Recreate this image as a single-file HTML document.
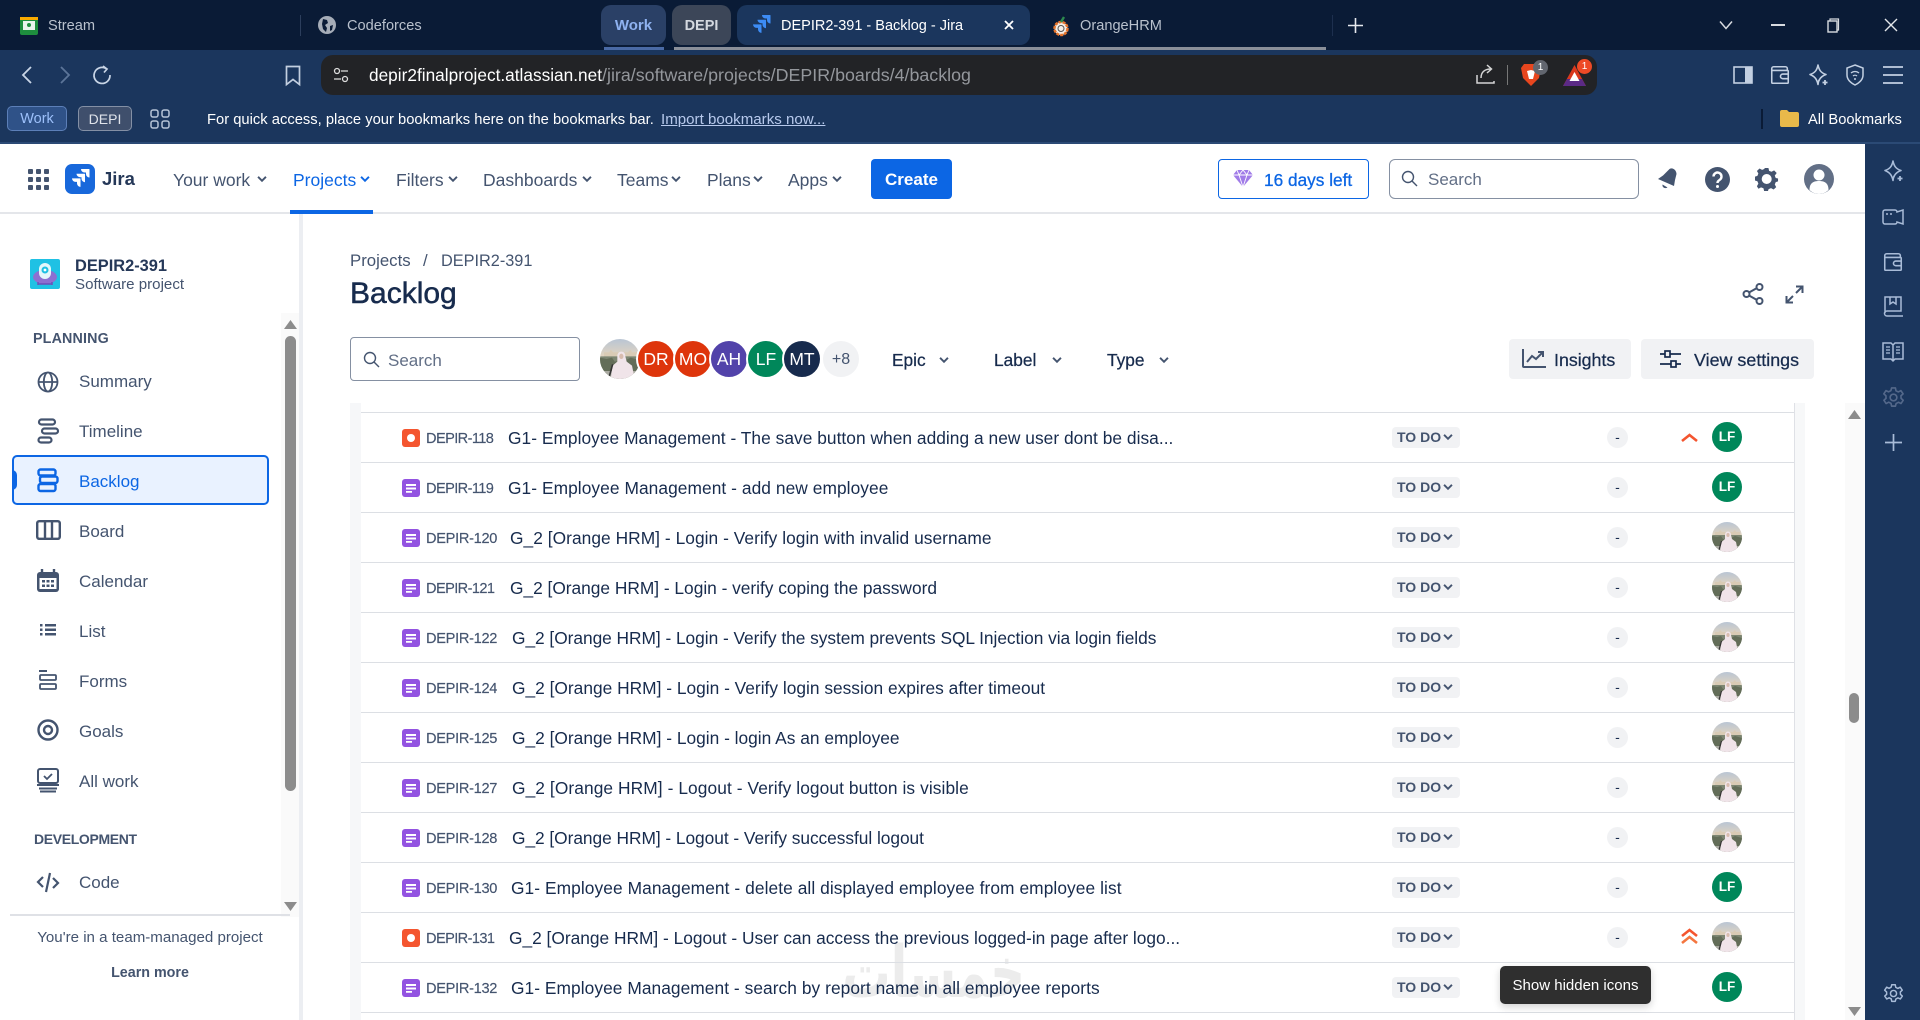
<!DOCTYPE html>
<html lang="en"><head><meta charset="utf-8"><title>DEPIR2-391 - Backlog - Jira</title>
<style>
*{box-sizing:border-box}
html,body{margin:0;padding:0;width:1920px;height:1020px;overflow:hidden;background:#fff;font-family:"Liberation Sans","DejaVu Sans",sans-serif;color:#172b4d}
.a{position:absolute}
.t{position:absolute;white-space:nowrap;height:24px;line-height:24px}
svg{position:absolute;overflow:visible}
.nav{font-size:17.5px;color:#44546f}
.side{font-size:17px;color:#44546f;left:79px}
.row{position:absolute;left:361px;width:1433px;height:50px;border-bottom:1px solid #dcdfe4}
.k{font-size:14.6px;color:#44546f;left:65px;top:14px;letter-spacing:-.3px;-webkit-text-stroke:.15px #44546f}
.k.n{letter-spacing:-.6px}
.s{font-size:17.35px;color:#172b4d;top:13px}
.st{position:absolute;left:1031px;top:14px;width:68px;height:21px;background:#f1f2f4;border-radius:4px;font-size:14px;font-weight:700;color:#44546f;line-height:21px;padding-left:5px;white-space:nowrap}
.st svg{left:49px;top:3px}
.d{position:absolute;left:1246px;top:14px;width:21px;height:21px;border-radius:11px;background:#f1f2f4;font-size:14px;line-height:20px;text-align:center;color:#172b4d}
.lf{position:absolute;left:1351px;top:9px;width:30px;height:30px;border-radius:50%;background:#00875a;color:#fff;font-size:13.5px;font-weight:700;line-height:30px;text-align:center}
.ic{left:41px;top:16px}
.ph{left:1351px;top:9px}
.av{position:absolute;top:339px;width:40px;height:40px;border-radius:50%;border:2px solid #fff;color:#fff;font-size:17.5px;font-weight:500;line-height:36px;text-align:center;background:#de350b}
.btn{position:absolute;background:#f1f2f4;border-radius:4px}
.m{font-size:17.3px;font-weight:500;color:#172b4d;-webkit-text-stroke:.25px #172b4d}
</style></head><body>

<svg width="0" height="0" style="position:absolute">
<defs>
<linearGradient id="sky" x1="0" y1="0" x2="0" y2="1"><stop offset="0" stop-color="#b9c5d4"/><stop offset="1" stop-color="#e2d4c0"/></linearGradient>
<clipPath id="pc"><circle cx="15" cy="15" r="15"/></clipPath>
<symbol id="photo" viewBox="0 0 30 30"><g clip-path="url(#pc)"><rect width="30" height="13" fill="url(#sky)"/><path d="M3 13V10h4l1-2 2 2h11l2-2 1 2h4v3z" fill="#d9cbb5"/><rect y="13" width="30" height="17" fill="#7d8672"/><path d="M0 14l5 1 4-1 2 3 8-1 4-2 7 2v8H0z" fill="#636d58"/><rect y="24" width="30" height="6" fill="#a9a9a0"/><path d="M13 13c0-2 1-3.500 3-3.500s3 1.500 3 3.500l1 4 4 3 2 10H8l1.500-10 3.500-3z" fill="#f0e4e9"/><ellipse cx="16" cy="13" rx="1.600" ry="2" fill="#d8bcae"/><path d="M9.500 19L7 28" stroke="#333" stroke-width="1.200"/></g></symbol>
<symbol id="task" viewBox="0 0 18 18"><rect width="18" height="18" rx="3" fill="#9353e1"/><path d="M4 5h10v2H4zM4 8.500h10v2H4zM4 12h6v1.800H4z" fill="#fff"/></symbol>
<symbol id="bug" viewBox="0 0 18 18"><rect width="18" height="18" rx="3" fill="#f4552f"/><circle cx="9" cy="9" r="4" fill="#fff"/></symbol>
<symbol id="chev" viewBox="0 0 16 16"><path d="M3.500 5.500L8 10l4.500-4.500" fill="none" stroke="currentColor" stroke-width="2.200"/></symbol>
<symbol id="jira" viewBox="0 0 24 24"><path d="M21 2h-8a3.500 3.500 0 0 0 3.500 3.500H18v1.500a3.500 3.500 0 0 0 3.500 3.500V2.500a.5.5 0 0 0-.5-.5zM16.500 6.700h-8a3.500 3.500 0 0 0 3.500 3.500h1.500v1.500a3.500 3.500 0 0 0 3.500 3.500V7.200a.5.5 0 0 0-.5-.5zM12 11.400H4a3.500 3.500 0 0 0 3.500 3.500H9v1.500a3.500 3.500 0 0 0 3.500 3.500v-8a.5.5 0 0 0-.5-.5z" fill="currentColor"/></symbol>
<symbol id="sparkle" viewBox="0 0 24 24"><path d="M12 2c1 5 3 8 8 9.500-3 1-5 2.500-6.500 5-1 1.500-1.500 3-1.500 5-1-5-3-8-8-10 5-1.500 7-4.500 8-9.500z" fill="none" stroke="currentColor" stroke-width="1.600" stroke-linejoin="round"/><path d="M19 17v5M16.500 19.500h5" stroke="currentColor" stroke-width="1.800"/></symbol>
<symbol id="wallet" viewBox="0 0 24 24"><path d="M20 7V5a2 2 0 0 0-2-2H5a2 2 0 0 0-2 2v15a1 1 0 0 0 1 1h16a1 1 0 0 0 1-1V8a1 1 0 0 0-1-1H3.500M21 11h-6a2.500 2.500 0 0 0 0 5h6" fill="none" stroke="currentColor" stroke-width="1.700"/></symbol>
<symbol id="gear" viewBox="0 0 24 24"><path d="M10 2h4l.6 3 2.400 1.200 2.700-1.400 2.300 3.400-2.200 2 .1 2.700 2.200 2-2.300 3.400-2.700-1.300-2.400 1.300-.7 2.700h-4l-.6-2.900-2.400-1.200-2.700 1.400-2.300-3.400 2.200-2-.1-2.700-2.200-2 2.300-3.400 2.700 1.300 2.400-1.300z" fill="none" stroke="currentColor" stroke-width="1.700" stroke-linejoin="round"/><circle cx="12" cy="12" r="3.500" fill="none" stroke="currentColor" stroke-width="1.700"/></symbol>
</defs></svg>

<!-- tab strip -->
<div class="a" style="left:0;top:0;width:1920px;height:50px;background:#0a1b36"></div>
<svg style="left:20px;top:17px" width="18" height="18" viewBox="0 0 18 18"><rect width="18" height="18" rx="2" fill="#1e8e3e"/><rect y="0" width="18" height="3" fill="#f9ab00"/><rect x="3" y="4" width="12" height="9" fill="#fff" opacity=".9"/><circle cx="9" cy="8" r="2" fill="#1e8e3e"/></svg>
<div class="t" style="left:48px;top:14px;font-size:14.600px;color:#b9c1cd">Stream</div>
<div class="a" style="left:300px;top:15px;width:1px;height:21px;background:#2c3e5c"></div>
<svg style="left:318px;top:16px" width="18" height="18" viewBox="0 0 18 18"><circle cx="9" cy="9" r="9" fill="#a6adb8"/><path d="M5 3l4 1 1 3-3 2 2 3-1 4-3-3-1-5zM12 10l3-1-1 5-2 1z" fill="#0a1b36"/></svg>
<div class="t" style="left:347px;top:14px;font-size:14.600px;color:#b9c1cd">Codeforces</div>
<div class="a" style="left:601px;top:5px;width:65px;height:40px;background:#2a4066;border-radius:10px"></div>
<div class="t" style="left:601px;top:14px;width:65px;text-align:center;font-size:15px;font-weight:700;color:#8fb2f0">Work</div>
<div class="a" style="left:672px;top:5px;width:59px;height:40px;background:#3c4658;border-radius:10px"></div>
<div class="t" style="left:672px;top:14px;width:59px;text-align:center;font-size:14.500px;font-weight:700;color:#d5d9e0">DEPI</div>
<div class="a" style="left:737px;top:5px;width:293px;height:40px;background:#1b365d;border-radius:10px"></div>
<svg style="left:749px;top:13px;color:#3d8cf5" width="24" height="24"><use href="#jira" width="24" height="24"/></svg>
<div class="t" style="left:781px;top:14px;font-size:14.500px;color:#fff">DEPIR2-391 - Backlog - Jira</div>
<svg style="left:1003px;top:19px" width="12" height="12" viewBox="0 0 12 12"><path d="M2 2l8 8M10 2l-8 8" stroke="#fff" stroke-width="1.800"/></svg>
<svg style="left:1052px;top:16px" width="18" height="20" viewBox="0 0 18 20"><circle cx="9" cy="12.500" r="6.500" fill="#f5efe8" stroke="#e8742a" stroke-width="2.500" stroke-dasharray="3 1"/><circle cx="9" cy="12.500" r="3" fill="none" stroke="#555" stroke-width="1"/><path d="M9 6l3-5" stroke="#2d8a4e" stroke-width="2.400"/></svg>
<div class="t" style="left:1080px;top:14px;font-size:14.600px;color:#b9c1cd">OrangeHRM</div>
<div class="a" style="left:1332px;top:15px;width:1px;height:21px;background:#1d2f4e"></div>
<svg style="left:1348px;top:18px" width="15" height="15" viewBox="0 0 15 15"><path d="M7.500 0v15M0 7.500h15" stroke="#e6e9ee" stroke-width="1.600"/></svg>
<div class="a" style="left:604px;top:47px;width:60px;height:3px;background:#4a6aa5"></div>
<div class="a" style="left:674px;top:47px;width:652px;height:3px;background:#8a8f99"></div>
<svg style="left:1719px;top:20px" width="14" height="10" viewBox="0 0 14 10"><path d="M1 1.500l6 7 6-7" fill="none" stroke="#d8dbe0" stroke-width="1.500"/></svg>
<div class="a" style="left:1771px;top:24px;width:14px;height:1.500px;background:#d8dbe0"></div>
<svg style="left:1827px;top:18px" width="13" height="15" viewBox="0 0 13 15"><path d="M3 2.500V1h8.500v11H10" fill="none" stroke="#d8dbe0" stroke-width="1.200"/><rect x="1" y="3" width="9" height="11" fill="none" stroke="#d8dbe0" stroke-width="1.400"/></svg>
<svg style="left:1884px;top:18px" width="14" height="14" viewBox="0 0 14 14"><path d="M1 1l12 12M13 1L1 13" stroke="#e3e6ea" stroke-width="1.400"/></svg>

<!-- toolbar -->
<div class="a" style="left:0;top:50px;width:1920px;height:94px;background:#1b365d"></div>
<div class="a" style="left:0;top:142px;width:1920px;height:2px;background:#2b4a75"></div>
<svg style="left:21px;top:65px" width="12" height="20" viewBox="0 0 12 20"><path d="M10 2L2 10l8 8" fill="none" stroke="#c9d5e6" stroke-width="1.800"/></svg>
<svg style="left:59px;top:65px" width="12" height="20" viewBox="0 0 12 20"><path d="M2 2l8 8-8 8" fill="none" stroke="#5c7599" stroke-width="1.800"/></svg>
<svg style="left:92px;top:65px" width="20" height="20" viewBox="0 0 20 20"><path d="M14 3.500A8 8 0 1 0 18 10" fill="none" stroke="#c9d5e6" stroke-width="1.700"/><path d="M11 1l4 3-3 3.500" fill="none" stroke="#c9d5e6" stroke-width="1.700"/></svg>
<svg style="left:285px;top:65px" width="16" height="21" viewBox="0 0 16 21"><path d="M1.500 1.500h13v18l-6.500-5-6.500 5z" fill="none" stroke="#c3cfe0" stroke-width="1.700"/></svg>
<div class="a" style="left:321px;top:55px;width:1276px;height:40px;background:#222326;border-radius:12px"></div>
<svg style="left:333px;top:67px" width="16" height="16" viewBox="0 0 16 16"><circle cx="4" cy="4" r="2.500" fill="none" stroke="#ddd" stroke-width="1.300"/><path d="M8 4h7M1 12h7" stroke="#ddd" stroke-width="1.300"/><circle cx="12" cy="12" r="2.500" fill="none" stroke="#ddd" stroke-width="1.300"/></svg>
<div class="t" style="left:369px;top:63px;font-size:17.250px;color:#fff">depir2finalproject.atlassian.net<span style="color:#94979c;font-size:17.850px">/jira/software/projects/DEPIR/boards/4/backlog</span></div>
<svg style="left:1476px;top:64px" width="20" height="21" viewBox="0 0 20 21"><path d="M1 11v8h17v-2M5 14c0-6 4-9 10-9M11 1l4.500 4-4.500 4" fill="none" stroke="#d5d5d5" stroke-width="1.500"/></svg>
<div class="a" style="left:1507px;top:65px;width:1px;height:20px;background:#777"></div>
<svg style="left:1521px;top:63px" width="20" height="24" viewBox="0 0 20 24"><path d="M3 1h14l3 4-2 10-8 8-8-8L0 5z" fill="#e8461e"/><path d="M6 8l4-1 4 1-1 4-1 4h-4l-1-4z" fill="#fff"/></svg>
<div class="a" style="left:1533px;top:60px;width:15px;height:15px;border-radius:50%;background:#62666f;color:#fff;font-size:10px;line-height:15px;text-align:center">1</div>
<svg style="left:1563px;top:65px" width="23" height="21" viewBox="0 0 23 21"><path d="M11.500 0L23 21H0z" fill="#d9391f"/><path d="M0 21l4-7h15l4 7z" fill="#5b2a86"/><path d="M11.500 7l5 9h-10z" fill="#fff"/></svg>
<div class="a" style="left:1577px;top:59px;width:15px;height:15px;border-radius:50%;background:#ee4a26;color:#fff;font-size:10px;line-height:15px;text-align:center">1</div>
<svg style="left:1733px;top:66px" width="20" height="18" viewBox="0 0 20 18"><rect x="1" y="1" width="18" height="16" fill="none" stroke="#c3d0e2" stroke-width="1.600"/><rect x="12" y="1" width="7" height="16" fill="#c3d0e2"/></svg>
<svg style="left:1769px;top:64px;color:#c3d0e2" width="22" height="22"><use href="#wallet" width="22" height="22"/></svg>
<svg style="left:1806px;top:63px;color:#c3d0e2" width="24" height="24"><use href="#sparkle" width="24" height="24"/></svg>
<svg style="left:1846px;top:64px" width="18" height="22" viewBox="0 0 18 22"><path d="M9 1l8 3v7c0 5-4 8-8 10-4-2-8-5-8-10V4z" fill="none" stroke="#c3d0e2" stroke-width="1.500"/><path d="M5 9a6 6 0 0 1 8 0M7 12a3 3 0 0 1 4 0" fill="none" stroke="#c3d0e2" stroke-width="1.300"/><circle cx="9" cy="15" r="1" fill="#c3d0e2"/></svg>
<svg style="left:1883px;top:66px" width="20" height="18" viewBox="0 0 20 18"><path d="M0 1h20M0 9h20M0 17h20" stroke="#c3d0e2" stroke-width="1.700"/></svg>

<!-- bookmarks bar -->
<div class="a" style="left:7px;top:106px;width:60px;height:25px;background:#2f5288;border:1px solid #5c7fb8;border-radius:5px;color:#9cc0fa;font-size:14.500px;line-height:24px;text-align:center">Work</div>
<div class="a" style="left:78px;top:106px;width:54px;height:25px;background:#3f4f6c;border:1px solid #8490a5;border-radius:5px;color:#dfe3ea;font-size:14px;line-height:24px;text-align:center">DEPI</div>
<svg style="left:150px;top:109px" width="20" height="20" viewBox="0 0 20 20"><g fill="none" stroke="#b6c3d6" stroke-width="1.500"><rect x="1" y="1" width="7" height="7" rx="2"/><rect x="12" y="1" width="7" height="7" rx="2"/><rect x="1" y="12" width="7" height="7" rx="2"/><rect x="12" y="12" width="7" height="7" rx="2"/></g></svg>
<div class="t" style="left:207px;top:108px;font-size:14.750px;color:#fff">For quick access, place your bookmarks here on the bookmarks bar.</div>
<div class="t" style="left:661px;top:108px;font-size:15.100px;color:#b7c9ec;text-decoration:underline">Import bookmarks now...</div>
<div class="a" style="left:1761px;top:109px;width:2px;height:20px;background:#0a1b36"></div>
<svg style="left:1780px;top:110px" width="19" height="17" viewBox="0 0 19 17"><path d="M0 2a2 2 0 0 1 2-2h5l2 2h8a2 2 0 0 1 2 2v11a2 2 0 0 1-2 2H2a2 2 0 0 1-2-2z" fill="#e8b94a"/></svg>
<div class="t" style="left:1808px;top:108px;font-size:14.700px;color:#fff">All Bookmarks</div>

<!-- jira top nav -->
<div class="a" style="left:0;top:212px;width:1865px;height:2px;background:#e4e6ea"></div>
<svg style="left:28px;top:169px" width="21" height="21" viewBox="0 0 21 21"><g fill="#44546f"><rect width="5" height="5" rx="1"/><rect x="8" width="5" height="5" rx="1"/><rect x="16" width="5" height="5" rx="1"/><rect y="8" width="5" height="5" rx="1"/><rect x="8" y="8" width="5" height="5" rx="1"/><rect x="16" y="8" width="5" height="5" rx="1"/><rect y="16" width="5" height="5" rx="1"/><rect x="8" y="16" width="5" height="5" rx="1"/><rect x="16" y="16" width="5" height="5" rx="1"/></g></svg>
<div class="a" style="left:65px;top:164px;width:30px;height:30px;background:#1868db;border-radius:7px"></div>
<svg style="left:68px;top:167px;color:#fff" width="24" height="24"><use href="#jira" width="24" height="24"/></svg>
<div class="t" style="left:102px;top:167px;font-size:18.500px;font-weight:700;color:#253858">Jira</div>
<div class="t nav" style="left:173px;top:168px">Your work</div>
<svg style="left:255px;top:172px;color:#44546f" width="14" height="14"><use href="#chev" width="14" height="14"/></svg>
<div class="t nav" style="left:293px;top:168px;color:#0c66e4">Projects</div>
<svg style="left:358px;top:172px;color:#0c66e4" width="14" height="14"><use href="#chev" width="14" height="14"/></svg>
<div class="t nav" style="left:396px;top:168px">Filters</div>
<svg style="left:446px;top:172px;color:#44546f" width="14" height="14"><use href="#chev" width="14" height="14"/></svg>
<div class="t nav" style="left:483px;top:168px">Dashboards</div>
<svg style="left:580px;top:172px;color:#44546f" width="14" height="14"><use href="#chev" width="14" height="14"/></svg>
<div class="t nav" style="left:617px;top:168px">Teams</div>
<svg style="left:669px;top:172px;color:#44546f" width="14" height="14"><use href="#chev" width="14" height="14"/></svg>
<div class="t nav" style="left:707px;top:168px">Plans</div>
<svg style="left:751px;top:172px;color:#44546f" width="14" height="14"><use href="#chev" width="14" height="14"/></svg>
<div class="t nav" style="left:788px;top:168px">Apps</div>
<svg style="left:830px;top:172px;color:#44546f" width="14" height="14"><use href="#chev" width="14" height="14"/></svg>
<div class="a" style="left:290px;top:210px;width:83px;height:4px;background:#0c66e4"></div>
<div class="a" style="left:871px;top:159px;width:81px;height:40px;background:#0c66e4;border-radius:4px;color:#fff;font-size:17px;font-weight:700;line-height:41px;text-align:center">Create</div>
<div class="a" style="left:1218px;top:159px;width:151px;height:40px;border:1.500px solid #0c66e4;border-radius:4px"></div>
<svg style="left:1233px;top:169px" width="20" height="18" viewBox="0 0 20 18"><path d="M4 1h12l4 5-10 12L0 6z" fill="#a07be8"/><path d="M0 6h20M6 6l4 12 4-12M4 1l2 5M16 1l-2 5M10 1L6 6M10 1l4 5" stroke="#fff" stroke-width=".9" fill="none"/></svg>
<div class="t" style="left:1264px;top:168px;font-size:17.250px;font-weight:500;color:#0c66e4;-webkit-text-stroke:.3px #0c66e4">16 days left</div>
<div class="a" style="left:1389px;top:159px;width:250px;height:40px;border:1.500px solid #8590a2;border-radius:6px"></div>
<svg style="left:1401px;top:170px" width="17" height="17" viewBox="0 0 17 17"><circle cx="7" cy="7" r="5.500" fill="none" stroke="#44546f" stroke-width="1.400"/><path d="M11 11l5 5" stroke="#44546f" stroke-width="1.400"/></svg>
<div class="t" style="left:1428px;top:168px;font-size:17px;color:#626f86">Search</div>
<svg style="left:1656px;top:167px" width="22" height="24" viewBox="0 0 22 24"><path d="M13.500 2c3-2 7 1 7 5l-1.500 6-1 6-16-7 5-3.500z" fill="#44546f"/><path d="M6.500 17.500c-.5 3 2.500 4.500 5 3z" fill="#44546f"/></svg>
<svg style="left:1705px;top:167px" width="25" height="25" viewBox="0 0 25 25"><circle cx="12.500" cy="12.500" r="12.500" fill="#44546f"/><path d="M8.500 9.500a4 4 0 1 1 6 3.500c-1.200.7-2 1.300-2 3" fill="none" stroke="#fff" stroke-width="2.400"/><circle cx="12.500" cy="19.500" r="1.500" fill="#fff"/></svg>
<svg style="left:1755px;top:167px" width="24" height="24" viewBox="0 0 24 24"><path d="M10 1h4l.7 3 2.500 1 2.700-1.500 2.700 2.700L20.600 9l1 2.500 2.400.5v3l-2.400.7-1 2.500 1.500 2.700-2.700 2.600-2.700-1.500-2.500 1-.7 2h-4l-.7-2.800-2.500-1-2.700 1.500L2 20l1.500-2.700-1-2.500L0 14v-4l2.500-.7 1-2.500L2 4.200l2.700-2.700L7.400 3l2.500-1z" fill="#44546f" transform="scale(.96)"/><circle cx="11.700" cy="12" r="5" fill="#fff"/></svg>
<svg style="left:1804px;top:164px" width="30" height="30" viewBox="0 0 30 30"><circle cx="15" cy="15" r="15" fill="#626f86"/><circle cx="15" cy="11" r="5.500" fill="#fff"/><path d="M5.500 26c0-7 4-9 9.500-9s9.500 2 9.500 9c-2.500 2.500-6 4-9.500 4s-7-1.500-9.500-4z" fill="#fff"/></svg>

<!-- sidebar -->
<div class="a" style="left:299px;top:214px;width:4px;height:806px;background:#eceef2"></div>
<svg style="left:30px;top:259px" width="30" height="30" viewBox="0 0 30 30"><rect width="30" height="30" rx="2" fill="#1fc1e4"/><ellipse cx="15" cy="18" rx="12" ry="7" fill="#8d6fd1"/><path d="M8 23v3M22 23v3M8 25h14" stroke="#6c4fb8" stroke-width="1.500"/><rect x="9" y="4" width="12" height="16" rx="6" fill="#e4f7fb"/><circle cx="15" cy="11" r="3.500" fill="#1fc1e4"/><circle cx="15" cy="11" r="1.400" fill="#fff"/></svg>
<div class="t" style="left:75px;top:254px;font-size:16.400px;font-weight:700;color:#253858">DEPIR2-391</div>
<div class="t" style="left:75px;top:273px;font-size:15.100px;color:#44546f">Software project</div>
<div class="a" style="left:281px;top:313px;width:18px;height:604px;background:#fafafa"></div>
<svg style="left:284px;top:320px" width="13" height="9" viewBox="0 0 13 9"><path d="M6.500 0L13 9H0z" fill="#8c8c8c"/></svg>
<svg style="left:284px;top:902px" width="13" height="9" viewBox="0 0 13 9"><path d="M0 0h13L6.500 9z" fill="#8c8c8c"/></svg>
<div class="a" style="left:285px;top:336px;width:11px;height:455px;background:#8c8c8c;border-radius:6px"></div>
<div class="t" style="left:33px;top:327px;font-size:14.300px;font-weight:700;color:#44546f;letter-spacing:.15px">PLANNING</div>
<div class="a" style="left:12px;top:455px;width:257px;height:50px;background:#e9f2ff;border:2.500px solid #0c66e4;border-radius:5px"></div>
<div class="a" style="left:12px;top:470px;width:5px;height:20px;background:#0c66e4;border-radius:0 5px 5px 0"></div>
<div class="t side" style="top:370px">Summary</div>
<div class="t side" style="top:420px">Timeline</div>
<div class="t side" style="top:470px;color:#0c66e4">Backlog</div>
<div class="t side" style="top:520px">Board</div>
<div class="t side" style="top:570px">Calendar</div>
<div class="t side" style="top:620px">List</div>
<div class="t side" style="top:670px">Forms</div>
<div class="t side" style="top:720px">Goals</div>
<div class="t side" style="top:770px">All work</div>
<div class="t" style="left:34px;top:827px;font-size:14px;font-weight:700;color:#44546f;letter-spacing:-.35px">DEVELOPMENT</div>
<div class="t side" style="top:871px">Code</div>
<svg style="left:37px;top:371px" width="22" height="22" viewBox="0 0 22 22"><g fill="none" stroke="#44546f" stroke-width="1.800"><circle cx="11" cy="11" r="9.500"/><ellipse cx="11" cy="11" rx="4.200" ry="9.500"/><path d="M1.500 11h19"/></g></svg>
<svg style="left:37px;top:418px" width="22" height="27" viewBox="0 0 22 27"><g fill="none" stroke="#44546f" stroke-width="2.200"><rect x="2" y="1.500" width="16" height="5" rx="2.500"/><rect x="5" y="10.500" width="16" height="5" rx="2.500"/><rect x="1.500" y="19.500" width="13" height="5" rx="2.500"/></g></svg>
<svg style="left:37px;top:468px" width="22" height="25" viewBox="0 0 22 25"><g fill="none" stroke="#0c66e4" stroke-width="2.400"><rect x="1.500" y="1.500" width="17" height="6" rx="2"/><rect x="3" y="8.500" width="17.500" height="6.500" rx="2"/><rect x="1.500" y="16" width="17" height="7" rx="2"/></g></svg>
<svg style="left:36px;top:520px" width="25" height="20" viewBox="0 0 25 20"><rect x="1.200" y="1.200" width="22.600" height="17.600" rx="2" fill="none" stroke="#44546f" stroke-width="2.400"/><path d="M9 1v18M16 1v18" stroke="#44546f" stroke-width="2.400"/></svg>
<svg style="left:37px;top:569px" width="22" height="23" viewBox="0 0 22 23"><rect y="3" width="22" height="20" rx="3" fill="#44546f"/><rect x="2.500" y="9" width="17" height="11" fill="#fff"/><path d="M5 0v5M17 0v5" stroke="#44546f" stroke-width="2.400"/><g fill="#44546f"><rect x="5" y="11" width="3" height="2.500"/><rect x="9.500" y="11" width="3" height="2.500"/><rect x="14" y="11" width="3" height="2.500"/><rect x="5" y="15.500" width="3" height="2.500"/><rect x="9.500" y="15.500" width="3" height="2.500"/><rect x="14" y="15.500" width="3" height="2.500"/></g></svg>
<svg style="left:40px;top:623px" width="16" height="14" viewBox="0 0 16 14"><g fill="#44546f"><rect y="1" width="2.500" height="2.500"/><rect y="5.500" width="2.500" height="2.500"/><rect y="10" width="2.500" height="2.500"/><rect x="5" y="1" width="11" height="2.500"/><rect x="5" y="5.500" width="11" height="2.500"/><rect x="5" y="10" width="11" height="2.500"/></g></svg>
<svg style="left:39px;top:670px" width="18" height="20" viewBox="0 0 18 20"><path d="M0 1h8" stroke="#44546f" stroke-width="2"/><rect x="1" y="5" width="16" height="5" rx="1" fill="none" stroke="#44546f" stroke-width="1.800"/><rect x="1" y="14" width="16" height="5" rx="1" fill="none" stroke="#44546f" stroke-width="1.800"/></svg>
<svg style="left:37px;top:719px" width="22" height="22" viewBox="0 0 22 22"><circle cx="11" cy="11" r="9.500" fill="none" stroke="#44546f" stroke-width="2.400"/><circle cx="11" cy="11" r="4" fill="none" stroke="#44546f" stroke-width="2.400"/></svg>
<svg style="left:37px;top:768px" width="22" height="24" viewBox="0 0 22 24"><rect x="1" y="1" width="20" height="14" rx="2" fill="none" stroke="#44546f" stroke-width="2"/><path d="M7 8l3 3 5-5" fill="none" stroke="#44546f" stroke-width="1.800"/><path d="M0 17h22M2 20.500h18M3 23.500h16" stroke="#44546f" stroke-width="2"/></svg>
<svg style="left:37px;top:873px" width="22" height="19" viewBox="0 0 22 19"><path d="M6 4l-5 5 5 5M16 5l5 5-5 5" fill="none" stroke="#44546f" stroke-width="2.200"/><path d="M13 0L9 19" stroke="#44546f" stroke-width="2.200"/></svg>
<div class="a" style="left:10px;top:914px;width:280px;height:2px;background:#dfe1e6"></div>
<div class="t" style="left:0;width:300px;top:926px;text-align:center;font-size:15.100px;color:#44546f">You're in a team-managed project</div>
<div class="t" style="left:0;width:300px;top:961px;text-align:center;font-size:14.300px;font-weight:700;color:#44546f">Learn more</div>

<!-- page header -->
<div class="t" style="left:350px;top:249px;font-size:16.800px;color:#44546f">Projects</div>
<div class="t" style="left:423px;top:249px;font-size:16.800px;color:#44546f">/</div>
<div class="t" style="left:441px;top:249px;font-size:16.300px;color:#44546f">DEPIR2-391</div>
<div class="t" style="left:350px;top:282px;font-size:30px;font-weight:500;color:#172b4d;-webkit-text-stroke:.5px #172b4d">Backlog</div>
<svg style="left:1742px;top:283px" width="22" height="22" viewBox="0 0 22 22"><g fill="none" stroke="#44546f" stroke-width="2"><circle cx="4.500" cy="11" r="3"/><circle cx="17.500" cy="4" r="3"/><circle cx="17.500" cy="18" r="3"/><path d="M7 9.500l8-4.500M7 12.500l8 4.500"/></g></svg>
<svg style="left:1785px;top:285px" width="19" height="19" viewBox="0 0 19 19"><path d="M11 1.500h6.500V8M17 2l-6 6M8 17.500H1.500V11M2 17l6-6" fill="none" stroke="#44546f" stroke-width="2"/></svg>
<div class="a" style="left:350px;top:337px;width:230px;height:44px;border:1.500px solid #8590a2;border-radius:4px"></div>
<svg style="left:363px;top:351px" width="17" height="17" viewBox="0 0 17 17"><circle cx="7" cy="7" r="5.500" fill="none" stroke="#44546f" stroke-width="1.400"/><path d="M11 11l5 5" stroke="#44546f" stroke-width="1.400"/></svg>
<div class="t" style="left:388px;top:349px;font-size:17px;color:#626f86">Search</div>
<svg style="left:600px;top:339px" width="40" height="40"><use href="#photo" width="40" height="40"/></svg>
<div class="av" style="left:636px">DR</div>
<div class="av" style="left:673px">MO</div>
<div class="av" style="left:709px;background:#5243aa">AH</div>
<div class="av" style="left:746px;background:#00875a">LF</div>
<div class="av" style="left:782px;background:#172b4d">MT</div>
<div class="av" style="left:821px;background:#f1f2f4;color:#44546f;font-weight:400;font-size:16px;line-height:38px">+8</div>
<div class="t m" style="left:892px;top:348px">Epic</div>
<svg style="left:937px;top:353px;color:#44546f" width="14" height="14"><use href="#chev" width="14" height="14"/></svg>
<div class="t m" style="left:994px;top:348px">Label</div>
<svg style="left:1050px;top:353px;color:#44546f" width="14" height="14"><use href="#chev" width="14" height="14"/></svg>
<div class="t m" style="left:1107px;top:348px">Type</div>
<svg style="left:1157px;top:353px;color:#44546f" width="14" height="14"><use href="#chev" width="14" height="14"/></svg>
<div class="btn" style="left:1509px;top:339px;width:122px;height:40px"></div>
<svg style="left:1522px;top:349px" width="24" height="19" viewBox="0 0 24 19"><path d="M1 0v17a1 1 0 0 0 1 1h22" fill="none" stroke="#44546f" stroke-width="2"/><path d="M5 13l5-6 4 3 7-7M16 3h5v5" fill="none" stroke="#44546f" stroke-width="2"/></svg>
<div class="t m" style="left:1554px;top:348px;font-size:17.800px">Insights</div>
<div class="btn" style="left:1641px;top:339px;width:173px;height:40px"></div>
<svg style="left:1660px;top:350px" width="21" height="18" viewBox="0 0 21 18"><path d="M0 4h5M10 4h11M0 14h11M16 14h5" stroke="#172b4d" stroke-width="1.700"/><rect x="5" y="1" width="5" height="6" fill="none" stroke="#172b4d" stroke-width="1.700"/><rect x="11" y="11" width="5" height="6" fill="none" stroke="#172b4d" stroke-width="1.700"/></svg>
<div class="t m" style="left:1694px;top:348px;font-size:17.900px">View settings</div>

<!-- backlog list -->
<div class="a" style="left:350px;top:403px;width:11px;height:617px;background:#f6f7f9"></div>
<div class="a" style="left:1794px;top:403px;width:1.500px;height:617px;background:#dfe1e6"></div>
<div class="a" style="left:1795px;top:403px;width:10px;height:617px;background:#f7f8f9"></div>
<div class="a" style="left:361px;top:412px;width:1433px;height:1px;background:#dcdfe4"></div>
<div class="a" dir="rtl" style="left:845px;top:932px;width:180px;height:80px;line-height:80px;font-family:'DejaVu Sans',sans-serif;font-weight:700;font-size:72px;color:#ececec;white-space:nowrap;text-align:right;transform:scaleX(.67);transform-origin:right center">خمسات</div>

<div class="row" style="top:413px"><svg class="ic" width="18" height="18"><use href="#bug" width="18" height="18"/></svg><div class="t k n">DEPIR-118</div><div class="t s" style="left:147px;letter-spacing:.03px">G1- Employee Management - The save button when adding a new user dont be disa...</div><div class="st">TO DO<svg width="14" height="14"><use href="#chev" width="14" height="14"/></svg></div><div class="d">-</div><svg style="left:1320px;top:20px" width="17" height="9" viewBox="0 0 17 9"><path d="M1 8l7.500-6L16 8" fill="none" stroke="#f4552f" stroke-width="2.600"/></svg><div class="lf">LF</div></div>
<div class="row" style="top:463px"><svg class="ic" width="18" height="18"><use href="#task" width="18" height="18"/></svg><div class="t k n">DEPIR-119</div><div class="t s" style="left:147px;letter-spacing:.06px">G1- Employee Management - add new employee</div><div class="st">TO DO<svg width="14" height="14"><use href="#chev" width="14" height="14"/></svg></div><div class="d">-</div><div class="lf">LF</div></div>
<div class="row" style="top:513px"><svg class="ic" width="18" height="18"><use href="#task" width="18" height="18"/></svg><div class="t k">DEPIR-120</div><div class="t s" style="left:149px;letter-spacing:.04px">G_2 [Orange HRM] - Login - Verify login with invalid username</div><div class="st">TO DO<svg width="14" height="14"><use href="#chev" width="14" height="14"/></svg></div><div class="d">-</div><svg class="ph" width="30" height="30"><use href="#photo" width="30" height="30"/></svg></div>
<div class="row" style="top:563px"><svg class="ic" width="18" height="18"><use href="#task" width="18" height="18"/></svg><div class="t k n">DEPIR-121</div><div class="t s" style="left:149px;letter-spacing:-.02px">G_2 [Orange HRM] - Login - verify coping the password</div><div class="st">TO DO<svg width="14" height="14"><use href="#chev" width="14" height="14"/></svg></div><div class="d">-</div><svg class="ph" width="30" height="30"><use href="#photo" width="30" height="30"/></svg></div>
<div class="row" style="top:613px"><svg class="ic" width="18" height="18"><use href="#task" width="18" height="18"/></svg><div class="t k">DEPIR-122</div><div class="t s" style="left:151px;letter-spacing:-.045px">G_2 [Orange HRM] - Login - Verify the system prevents SQL Injection via login fields</div><div class="st">TO DO<svg width="14" height="14"><use href="#chev" width="14" height="14"/></svg></div><div class="d">-</div><svg class="ph" width="30" height="30"><use href="#photo" width="30" height="30"/></svg></div>
<div class="row" style="top:663px"><svg class="ic" width="18" height="18"><use href="#task" width="18" height="18"/></svg><div class="t k">DEPIR-124</div><div class="t s" style="left:151px">G_2 [Orange HRM] - Login - Verify login session expires after timeout</div><div class="st">TO DO<svg width="14" height="14"><use href="#chev" width="14" height="14"/></svg></div><div class="d">-</div><svg class="ph" width="30" height="30"><use href="#photo" width="30" height="30"/></svg></div>
<div class="row" style="top:713px"><svg class="ic" width="18" height="18"><use href="#task" width="18" height="18"/></svg><div class="t k">DEPIR-125</div><div class="t s" style="left:151px">G_2 [Orange HRM] - Login - login As an employee</div><div class="st">TO DO<svg width="14" height="14"><use href="#chev" width="14" height="14"/></svg></div><div class="d">-</div><svg class="ph" width="30" height="30"><use href="#photo" width="30" height="30"/></svg></div>
<div class="row" style="top:763px"><svg class="ic" width="18" height="18"><use href="#task" width="18" height="18"/></svg><div class="t k">DEPIR-127</div><div class="t s" style="left:151px;letter-spacing:.08px">G_2 [Orange HRM] - Logout - Verify logout button is visible</div><div class="st">TO DO<svg width="14" height="14"><use href="#chev" width="14" height="14"/></svg></div><div class="d">-</div><svg class="ph" width="30" height="30"><use href="#photo" width="30" height="30"/></svg></div>
<div class="row" style="top:813px"><svg class="ic" width="18" height="18"><use href="#task" width="18" height="18"/></svg><div class="t k">DEPIR-128</div><div class="t s" style="left:151px;letter-spacing:-.05px">G_2 [Orange HRM] - Logout - Verify successful logout</div><div class="st">TO DO<svg width="14" height="14"><use href="#chev" width="14" height="14"/></svg></div><div class="d">-</div><svg class="ph" width="30" height="30"><use href="#photo" width="30" height="30"/></svg></div>
<div class="row" style="top:863px"><svg class="ic" width="18" height="18"><use href="#task" width="18" height="18"/></svg><div class="t k">DEPIR-130</div><div class="t s" style="left:150px;letter-spacing:.07px">G1- Employee Management - delete all displayed employee from employee list</div><div class="st">TO DO<svg width="14" height="14"><use href="#chev" width="14" height="14"/></svg></div><div class="d">-</div><div class="lf">LF</div></div>
<div class="row" style="top:913px"><svg class="ic" width="18" height="18"><use href="#bug" width="18" height="18"/></svg><div class="t k n">DEPIR-131</div><div class="t s" style="left:148px;letter-spacing:-.01px">G_2 [Orange HRM] - Logout - User can access the previous logged-in page after logo...</div><div class="st">TO DO<svg width="14" height="14"><use href="#chev" width="14" height="14"/></svg></div><div class="d">-</div><svg style="left:1320px;top:15px" width="17" height="17" viewBox="0 0 17 17"><path d="M1 8l7.500-6L16 8" fill="none" stroke="#f4552f" stroke-width="2.600"/><path d="M1 15l7.500-6L16 15" fill="none" stroke="#f4763f" stroke-width="2.600"/></svg><svg class="ph" width="30" height="30"><use href="#photo" width="30" height="30"/></svg></div>
<div class="row" style="top:963px"><svg class="ic" width="18" height="18"><use href="#task" width="18" height="18"/></svg><div class="t k">DEPIR-132</div><div class="t s" style="left:150px;letter-spacing:.05px">G1- Employee Management - search by report name in all employee reports</div><div class="st">TO DO<svg width="14" height="14"><use href="#chev" width="14" height="14"/></svg></div><div class="d">-</div><div class="lf">LF</div></div>

<!-- main page scrollbar -->
<div class="a" style="left:1845px;top:403px;width:20px;height:617px;background:#fafafa"></div>
<svg style="left:1848px;top:410px" width="13" height="9" viewBox="0 0 13 9"><path d="M6.500 0L13 9H0z" fill="#8c8c8c"/></svg>
<svg style="left:1848px;top:1007px" width="13" height="9" viewBox="0 0 13 9"><path d="M0 0h13L6.500 9z" fill="#8c8c8c"/></svg>
<div class="a" style="left:1849px;top:693px;width:10px;height:30px;background:#8c8c8c;border-radius:5px"></div>

<!-- right brave side panel -->
<div class="a" style="left:1865px;top:144px;width:55px;height:876px;background:#1b365d"></div>
<svg style="left:1881px;top:159px;color:#a9bcd8" width="24" height="24"><use href="#sparkle" width="24" height="24"/></svg>
<svg style="left:1882px;top:209px" width="22" height="16" viewBox="0 0 22 16"><path d="M15 3a2 2 0 0 0-2-2H3a2 2 0 0 0-2 2v10a2 2 0 0 0 2 2h10a2 2 0 0 0 2-2l6 2V1z" fill="none" stroke="#a9bcd8" stroke-width="1.500"/><path d="M4 5h2M8 5h2" stroke="#a9bcd8" stroke-width="1.500"/></svg>
<svg style="left:1882px;top:251px;color:#a9bcd8" width="22" height="22"><use href="#wallet" width="22" height="22"/></svg>
<svg style="left:1883px;top:296px" width="20" height="21" viewBox="0 0 20 21"><path d="M2 17V1h16v14H4a2.500 2.500 0 0 0 0 5h16" fill="none" stroke="#a9bcd8" stroke-width="1.500"/><path d="M7 1v7l3-2 3 2V1" fill="none" stroke="#a9bcd8" stroke-width="1.500"/></svg>
<svg style="left:1882px;top:342px" width="22" height="21" viewBox="0 0 22 21"><path d="M1 1h8l2 2 2-2h8v16h-8l-2 2-2-2H1zM11 3v16" fill="none" stroke="#a9bcd8" stroke-width="1.500"/><path d="M4 5h4M4 8h4M4 11h4M14 5h4M14 8h4M14 11h4" stroke="#a9bcd8" stroke-width="1.300"/></svg>
<svg style="left:1882px;top:386px;color:#54688a" width="23" height="23"><use href="#gear" width="23" height="23"/></svg>
<svg style="left:1885px;top:434px" width="17" height="17" viewBox="0 0 17 17"><path d="M8.500 0v17M0 8.500h17" stroke="#a9bcd8" stroke-width="1.700"/></svg>
<svg style="left:1883px;top:983px;color:#a9bcd8" width="21" height="21"><use href="#gear" width="21" height="21"/></svg>

<!-- tooltip -->
<div class="a" style="left:1500px;top:966px;width:151px;height:38px;background:#2f2f2f;border-radius:5px;color:#fff;font-size:15px;line-height:39px;text-align:center;white-space:nowrap;box-shadow:0 3px 8px rgba(0,0,0,.18)">Show hidden icons</div>
</body></html>
